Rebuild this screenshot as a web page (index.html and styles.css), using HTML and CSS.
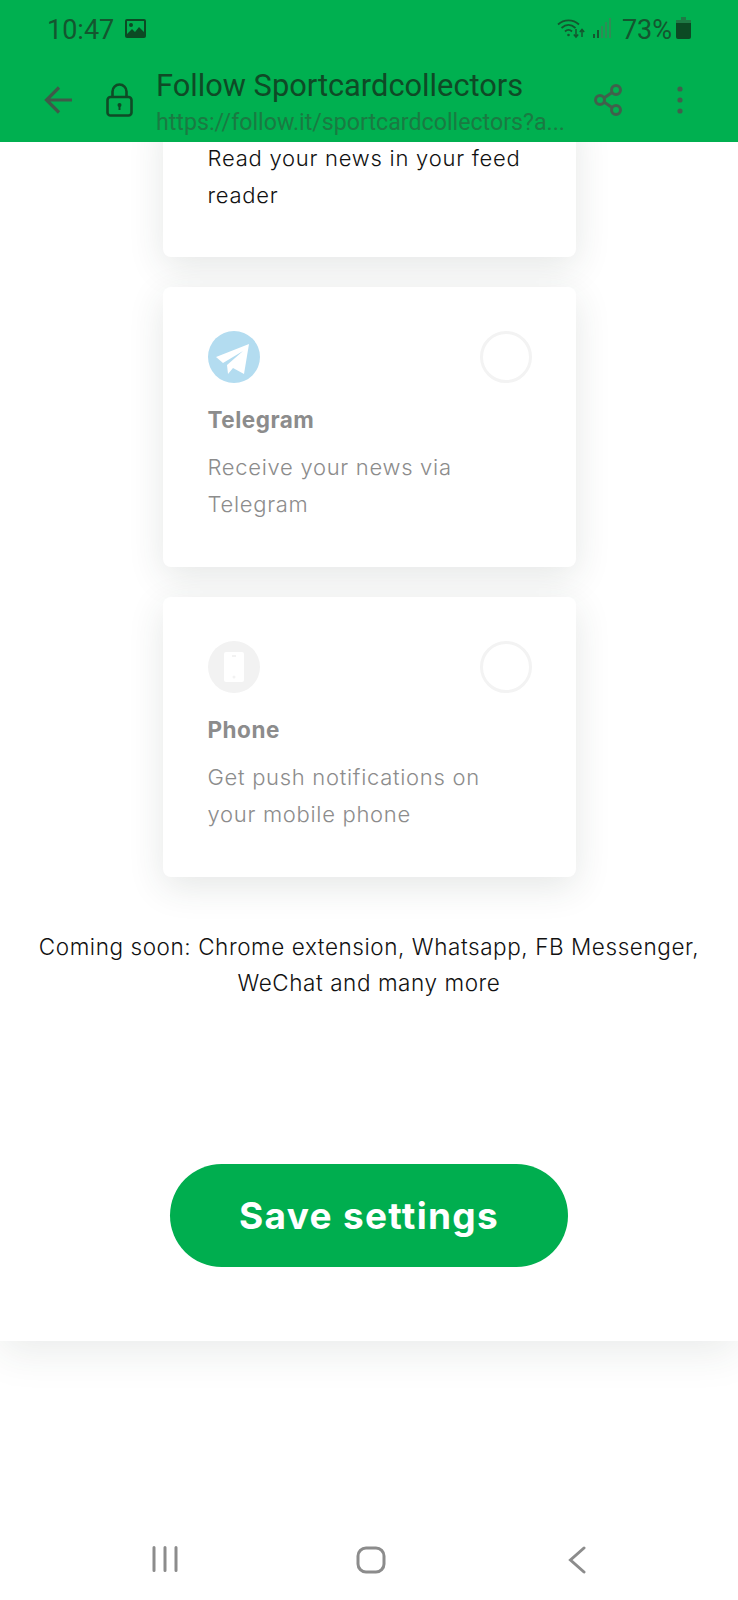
FILE: index.html
```html
<!DOCTYPE html>
<html lang="en">
<head>
<meta charset="utf-8">
<title>Follow Sportcardcollectors</title>
<link rel="stylesheet" href="styles.css">
</head>
<body>
<div class="screen">
  <header class="appbar">
    <div class="status">
      <div class="status-left">
        <span class="time">10:47</span>
        <svg class="pic-icon" viewBox="0 0 21 19"><path fill="#0c4a24" d="M2 0h17a2 2 0 0 1 2 2v15a2 2 0 0 1-2 2H2a2 2 0 0 1-2-2V2a2 2 0 0 1 2-2z"/><path fill="#00b050" d="M2 2h17v11l-5-5-4 5-3-3-5 5z"/><circle cx="6" cy="6" r="2" fill="#0c4a24"/></svg>
      </div>
      <div class="status-right">
        <svg class="wifi-icon" viewBox="0 0 28 21" fill="none" stroke="#14562f" stroke-width="1.8"><path d="M1 6.500C7 1 16 1 22 6.500"/><path d="M4.500 10C9 6 14 6 18.500 10"/><path d="M8 13.500c2-2 5-2 7 0"/><circle cx="11.500" cy="17" r="1.300" fill="#14562f" stroke="none"/><path d="M19 11v8M16.800 16.500l2.200 2.500 2.200-2.500M25 19v-7M22.800 14l2.200-2.500 2.200 2.500" stroke-width="1.500"/></svg>
        <svg class="signal-icon" viewBox="0 0 19 21"><rect x="0" y="16" width="2" height="4" fill="#14562f"/><rect x="4" y="12" width="2" height="8" fill="#14562f"/><rect x="8" y="8" width="2" height="12" fill="#2f8c55"/><rect x="12" y="4" width="2" height="16" fill="#2f8c55"/><rect x="16" y="0" width="2" height="20" fill="#2f8c55"/></svg>
        <span class="battery-text">73%</span>
        <svg class="battery-icon" viewBox="0 0 15 22"><path fill="#1f7a45" d="M5 0h5v3H5z"/><path fill="#0c4a24" d="M2 3h11a2 2 0 0 1 2 2v15a2 2 0 0 1-2 2H2a2 2 0 0 1-2-2V5a2 2 0 0 1 2-2z"/><path fill="#1f7a45" d="M0 3h15v3H0z"/></svg>
      </div>
    </div>
    <div class="toolbar">
      <svg class="back-icon" viewBox="0 0 28 28" fill="none" stroke="#3f5a49" stroke-width="3.200"><path d="M28 14H3M15 1.500 2.500 14 15 26.500"/></svg>
      <svg class="lock-icon" viewBox="0 0 27 34" fill="none" stroke="#0f4a26" stroke-width="2.600"><rect x="1.500" y="14" width="24" height="18.500" rx="3"/><path d="M6.500 14V8.500a7 7 0 0 1 14 0V14"/><circle cx="13.500" cy="22" r="2" fill="#0f4a26" stroke="none"/><path d="M13.500 23v4" stroke-width="2"/></svg>
      <div class="page-info">
        <div class="page-title">Follow Sportcardcollectors</div>
        <div class="page-url">https://follow.it/sportcardcollectors?a...</div>
      </div>
      <svg class="share-icon" viewBox="0 0 28 32" fill="none" stroke="#40604c" stroke-width="3"><circle cx="22" cy="6" r="4.500"/><circle cx="22" cy="26" r="4.500"/><circle cx="6" cy="16" r="4.500"/><path d="M10 14 18 8.500M10 18l8 5.500"/></svg>
      <svg class="more-icon" viewBox="0 0 6 28"><circle cx="3" cy="3" r="2.600" fill="#40604c"/><circle cx="3" cy="14" r="2.600" fill="#40604c"/><circle cx="3" cy="25" r="2.600" fill="#40604c"/></svg>
    </div>
  </header>

  <main class="panel">
    <section class="card card-first">
      <p class="card-text card-text-dark">Read your news in your feed<br>reader</p>
    </section>

    <section class="card">
      <div class="card-top">
        <svg class="channel-icon" viewBox="0 0 52 52"><circle cx="26" cy="26" r="26" fill="#b3dcf0"/><path fill="#fff" d="M8 26 41 13l-5 30-11-6-5 6-1-9 16-14-20 12z"/></svg>
        <span class="radio"></span>
      </div>
      <h2 class="card-title">Telegram</h2>
      <p class="card-text">Receive your news via<br>Telegram</p>
    </section>

    <section class="card">
      <div class="card-top">
        <svg class="channel-icon" viewBox="0 0 52 52"><circle cx="26" cy="26" r="26" fill="#f2f2f2"/><rect x="16" y="11" width="20" height="30" rx="2" fill="#fff"/><rect x="24" y="14" width="4" height="2" fill="#f2f2f2"/><circle cx="26" cy="36" r="1.500" fill="#f2f2f2"/></svg>
        <span class="radio"></span>
      </div>
      <h2 class="card-title">Phone</h2>
      <p class="card-text">Get push notifications on<br>your mobile phone</p>
    </section>

    <p class="coming">Coming soon: Chrome extension, Whatsapp, FB Messenger,<br>WeChat and many more</p>

    <button class="save" type="button">Save settings</button>
  </main>

  <nav class="navbar">
    <svg class="nav-recent" viewBox="0 0 26 26" fill="none" stroke="#8c8c8c" stroke-width="3" stroke-linecap="round"><path d="M2 1.500v23M13 1.500v23M24 1.500v23"/></svg>
    <svg class="nav-home" viewBox="0 0 30 28" fill="none" stroke="#8c8c8c" stroke-width="3"><rect x="2" y="2" width="26" height="24" rx="8"/></svg>
    <svg class="nav-back" viewBox="0 0 18 28" fill="none" stroke="#8c8c8c" stroke-width="3" stroke-linecap="round"><path d="M16 2 2.500 14 16 26"/></svg>
  </nav>
</div>
</body>
</html>
```

FILE: styles.css
```css
* { box-sizing: border-box; }

html, body { margin: 0; padding: 0; background: #fff; }

.screen {
  width: 738px;
  height: 1600px;
  overflow: hidden;
  display: flex;
  flex-direction: column;
  background: #fff;
  font-family: Inter, "Liberation Sans", sans-serif;
}

.appbar {
  height: 142px;
  flex: none;
  background: #00b050;
  font-family: Roboto, sans-serif;
  position: relative;
  z-index: 2;
}

.status {
  height: 58px;
  padding: 2px 47px 0 47px;
  display: flex;
  justify-content: space-between;
  align-items: center;
}

.status-left, .status-right { display: flex; align-items: center; }

.time, .battery-text { font-size: 27px; color: #14562f; }

.pic-icon { width: 21px; height: 19px; margin-left: 11px; margin-top: -4px; }
.wifi-icon { width: 28px; height: 21px; margin-top: -4px; }
.signal-icon { width: 19px; height: 21px; margin-left: 8px; margin-top: -4px; }
.battery-text { margin-left: 10px; }
.battery-icon { width: 15px; height: 22px; margin-left: 4px; margin-top: -4px; }

.toolbar {
  height: 84px;
  display: flex;
  align-items: center;
  padding-left: 44px;
}

.back-icon { width: 28px; height: 28px; flex: none; }
.lock-icon { width: 27px; height: 34px; flex: none; margin-left: 34px; }

.page-info {
  width: 412px;
  margin-left: 23px;
  padding-top: 2px;
  flex: none;
  white-space: nowrap;
}

.page-title { font-size: 30.800px; line-height: 42px; color: #0f4a26; }
.page-url { font-size: 23.200px; line-height: 30px; color: #1a7a42; }

.share-icon { width: 28px; height: 32px; flex: none; margin-left: 26px; }
.more-icon { width: 6px; height: 28px; flex: none; margin-left: 55px; }

.panel {
  height: 1199px;
  flex: none;
  display: flex;
  flex-direction: column;
  align-items: center;
  background: #fff;
  box-shadow: 0 10px 40px rgba(40, 60, 50, 0.1);
  position: relative;
  z-index: 1;
}

.card {
  width: 413px;
  height: 280px;
  flex: none;
  padding: 44px 45px 0;
  margin-bottom: 30px;
  background: #fff;
  border-radius: 8px;
  box-shadow: 0 10px 36px rgba(40, 60, 50, 0.12);
}

.card-first {
  height: 145px;
  padding-top: 28px;
  margin-top: -30px;
}

.card-top {
  display: flex;
  justify-content: space-between;
  height: 52px;
}

.channel-icon { width: 52px; height: 52px; display: block; }

.radio {
  width: 52px;
  height: 52px;
  margin-right: -1px;
  border: 3px solid #f3f3f3;
  border-radius: 50%;
}

.card-title {
  margin: 19px 0 0;
  font-size: 22.500px;
  line-height: 36px;
  font-weight: 700;
  letter-spacing: 0.5px;
  color: #8c8c8c;
}

.card-text {
  margin: 11px 0 0;
  font-size: 22px;
  line-height: 36.500px;
  font-weight: 300;
  letter-spacing: 0.7px;
  color: #8c8c8c;
}

.card-text-dark { margin-top: 0; color: #111; letter-spacing: 0.75px; font-weight: 350; }

.coming {
  margin: 22px 0 0;
  font-size: 22.500px;
  line-height: 36px;
  font-weight: 350;
  letter-spacing: 0.57px;
  text-align: center;
  color: #111;
  white-space: nowrap;
}

.save {
  width: 398px;
  height: 103px;
  flex: none;
  margin-top: 163px;
  border: 0;
  border-radius: 52px;
  background: #00ae4f;
  color: #fff;
  font: 700 37px Inter, "Liberation Sans", sans-serif;
  letter-spacing: 1.300px;
}

.navbar {
  flex: 1;
  display: flex;
  justify-content: space-between;
  align-items: flex-start;
  padding: 205px 152px 0;
}

.nav-recent { width: 26px; height: 26px; }
.nav-home { width: 30px; height: 28px; margin-right: 4px; }
.nav-back { width: 18px; height: 28px; }
```
